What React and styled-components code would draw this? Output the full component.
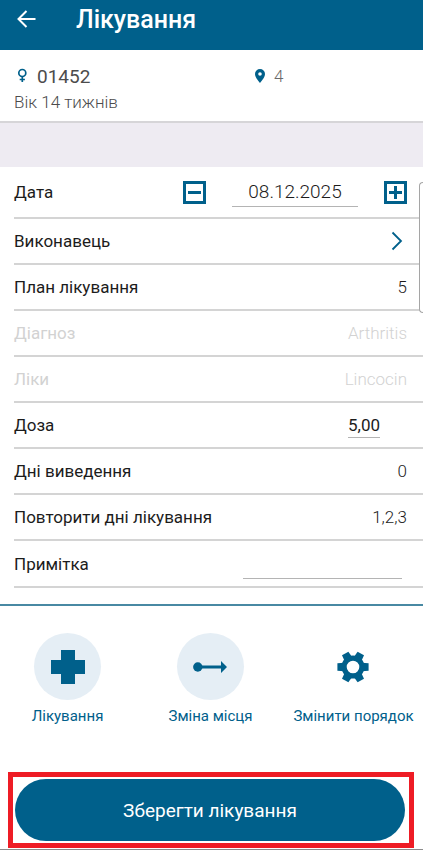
import React, { useState } from 'react';
import styled, { createGlobalStyle, css } from 'styled-components';

const BLUE = '#00608b';

const GlobalStyle = createGlobalStyle`
  * {
    box-sizing: border-box;
  }

  body {
    margin: 0;
    background: #fff;
    color: #1c1c1c;
    font-family: Roboto, 'Open Sans', sans-serif;
    font-size: 17px;
  }

  button, input {
    padding: 0;
    border: 0;
    background: none;
    color: inherit;
    font: inherit;
  }

  button {
    cursor: pointer;
  }

  svg {
    display: block;
    flex: none;
  }
`;

const Page = styled.div`
  position: relative;
  padding-bottom: 1px;
  border-bottom: 1px solid #8c8c8c;
`;

const Header = styled.header`
  display: flex;
  align-items: center;
  gap: 40px;
  height: 50px;
  padding: 0 16px 10px;
  background: ${BLUE};
  color: #fff;
`;

const Title = styled.h1`
  margin: 0;
  font-size: 25px;
  line-height: 32px;
  font-weight: 500;
`;

const Animal = styled.section`
  display: grid;
  grid-template-columns: 3fr 2fr;
  height: 73px;
  padding: 14px 9px 0 14px;
  border-bottom: 2px solid #d6d5d8;
`;

const Tag = styled.div`
  display: flex;
  align-items: center;
  gap: 8px;
  height: 24px;
  color: #6a6a6a;
`;

const Number = styled.span`
  font-size: 19px;
  color: #4c4c4c;
`;

const Place = styled.span`
  font-weight: 300;
`;

const Age = styled.p`
  margin: 2px 0 0;
  line-height: 24px;
  font-weight: 300;
  color: #4c4c4c;
`;

const Band = styled.div`
  height: 44px;
  background: #eeebf2;
`;

const Form = styled.form`
  display: flex;
  flex-direction: column;
`;

const Row = styled.div`
  display: flex;
  align-items: center;
  justify-content: space-between;
  height: ${({ $height }) => $height || '46px'};
  margin-left: 14px;
  padding-right: 16px;
  border-bottom: 2px solid #d4d4d4;
  ${({ $muted }) => $muted && css`
    color: #d2d2d2;
  `}
`;

const Label = styled.label`
  line-height: 24px;
`;

const Value = styled.output`
  font-weight: 300;
`;

const Stepper = styled.div`
  display: flex;
  align-items: center;
  gap: 26px;
`;

const PickButton = styled.button`
  padding: 0 4px;
`;

const Field = styled.input`
  width: ${({ $width }) => $width};
  height: ${({ $height }) => $height || '30px'};
  margin-right: ${({ $inset }) => $inset || '0'};
  border-bottom: 1px solid #b4b4b4;
  border-radius: 0;
  outline: none;
  text-align: center;
  font-size: ${({ $size }) => $size || '17px'};
  font-weight: ${({ $light }) => ($light ? 300 : 400)};
`;

const SideHandle = styled.div`
  position: absolute;
  top: 182px;
  right: 0;
  width: 4px;
  height: 131px;
  border: 1px solid #a5a5a5;
  border-right: 0;
  border-radius: 5px 0 0 5px;
  background: #fff;
`;

const Actions = styled.nav`
  display: grid;
  grid-template-columns: repeat(3, 1fr);
  justify-items: center;
  margin: 16px -2px 0 -4px;
  padding: 27px 0 46px;
  border-top: 2px solid #4889a3;
`;

const Action = styled.button`
  display: flex;
  flex-direction: column;
  align-items: center;
  gap: 6px;
  color: ${BLUE};
  font-size: 15px;
  line-height: 20px;
  white-space: nowrap;
`;

const Round = styled.span`
  display: grid;
  place-items: center;
  width: 67px;
  height: 67px;
  border-radius: 50%;
  background: ${({ $filled }) => ($filled ? '#e5eef5' : 'transparent')};
`;

const Footer = styled.footer`
  margin: 0 9px 0 8px;
  padding: 2px 4px 2px 2px;
  border: 5px solid #ee1c25;
`;

const SaveButton = styled.button`
  display: block;
  width: 100%;
  height: 62px;
  border-radius: 31px;
  background: ${BLUE};
  color: #fff;
  font-size: 19px;
`;

const BackIcon = () => (
  <svg width="20" height="20" viewBox="0 0 20 20" fill="none" stroke="currentColor" strokeWidth="2">
    <path d="M19.500 9H3M10.500 1L2.500 9L10.500 17" />
  </svg>
);

const FemaleIcon = () => (
  <svg width="15" height="16" viewBox="0 0 15 16" fill="none" stroke={BLUE} strokeWidth="1.700">
    <circle cx="8.300" cy="5" r="3.500" />
    <path d="M8.300 8.500V14M5.700 11.500h5.200" />
  </svg>
);

const PinIcon = () => (
  <svg width="12" height="14" viewBox="0 0 12 14">
    <path fill={BLUE} fillRule="evenodd" d="M6 0a5 5 0 0 0-5 5c0 3.600 5 9 5 9s5-5.400 5-9a5 5 0 0 0-5-5zm0 3.200a1.800 1.800 0 1 1 0 3.600a1.800 1.800 0 0 1 0-3.600z" />
  </svg>
);

const BoxIcon = ({ plus }) => (
  <svg width="23" height="23" viewBox="0 0 23 23" fill="none" stroke={BLUE} strokeWidth="3">
    <path d="M1.500 1.500h20v20h-20z" />
    <path d={plus ? 'M5 11.500h13M11.500 5v13' : 'M5 11.500h13'} />
  </svg>
);

const ChevronIcon = () => (
  <svg width="12" height="20" viewBox="0 0 12 20" fill="none" stroke={BLUE} strokeWidth="1.800">
    <path d="M1.500 1.500L10 10L1.500 18.500" />
  </svg>
);

const CrossIcon = () => (
  <svg width="34" height="34" viewBox="0 0 34 34" fill={BLUE}>
    <path d="M10 0h14v10h10v14H24v10H10V24H0V10h10z" />
  </svg>
);

const MoveIcon = () => (
  <svg width="34" height="14" viewBox="0 0 34 14" fill={BLUE}>
    <circle cx="4.800" cy="7" r="4.700" />
    <path d="M5 5.600h23V1l6 6l-6 6V8.400H5z" />
  </svg>
);

const GearIcon = () => (
  <svg width="32" height="32" viewBox="0 0 32 32" fill={BLUE}>
    <path fillRule="evenodd" d="M16 4.500a11.500 11.500 0 1 0 0 23a11.500 11.500 0 0 0 0-23zm0 5.200a6.300 6.300 0 1 1 0 12.600a6.300 6.300 0 0 1 0-12.600z" />
    {[30, 90, 150, 210, 270, 330].map((angle) => (
      <path key={angle} transform={`rotate(${angle} 16 16)`} d="M12.300 0.400h7.400l.6 7h-8.600z" />
    ))}
  </svg>
);

const App = () => {
  const [date, setDate] = useState('08.12.2025');
  const [dose, setDose] = useState('5,00');
  const [note, setNote] = useState('');

  const shiftDate = (days) => {
    const [d, m, y] = date.split('.').map((part) => parseInt(part, 10));
    const next = new Date(y, m - 1, d + days);
    const pad = (n) => String(n).padStart(2, '0');
    setDate(`${pad(next.getDate())}.${pad(next.getMonth() + 1)}.${next.getFullYear()}`);
  };

  return (
    <Page>
      <GlobalStyle />
      <Header>
        <button type="button" aria-label="Назад"><BackIcon /></button>
        <Title>Лікування</Title>
      </Header>
      <Animal>
        <div>
          <Tag><FemaleIcon /><Number>01452</Number></Tag>
          <Age>Вік 14 тижнів</Age>
        </div>
        <Tag><PinIcon /><Place>4</Place></Tag>
      </Animal>
      <Band />
      <Form onSubmit={(event) => event.preventDefault()}>
        <Row $height="52px">
          <Label htmlFor="date">Дата</Label>
          <Stepper>
            <button type="button" aria-label="Попередній день" onClick={() => shiftDate(-1)}><BoxIcon /></button>
            <Field
              id="date"
              $width="126px"
              $size="19px"
              $light
              value={date}
              onChange={(event) => setDate(event.target.value)}
            />
            <button type="button" aria-label="Наступний день" onClick={() => shiftDate(1)}><BoxIcon plus /></button>
          </Stepper>
        </Row>
        <Row>
          <Label htmlFor="worker">Виконавець</Label>
          <PickButton type="button" id="worker"><ChevronIcon /></PickButton>
        </Row>
        <Row>
          <Label htmlFor="plan">План лікування</Label>
          <Value id="plan">5</Value>
        </Row>
        <Row $muted>
          <Label htmlFor="diagnosis">Діагноз</Label>
          <Value id="diagnosis">Arthritis</Value>
        </Row>
        <Row $muted>
          <Label htmlFor="drug">Ліки</Label>
          <Value id="drug">Lincocin</Value>
        </Row>
        <Row>
          <Label htmlFor="dose">Доза</Label>
          <Field
            id="dose"
            $width="32px"
            $height="26px"
            $inset="27px"
            value={dose}
            onChange={(event) => setDose(event.target.value)}
          />
        </Row>
        <Row>
          <Label htmlFor="withdrawal">Дні виведення</Label>
          <Value id="withdrawal">0</Value>
        </Row>
        <Row>
          <Label htmlFor="repeat">Повторити дні лікування</Label>
          <Value id="repeat">1,2,3</Value>
        </Row>
        <Row $height="47px">
          <Label htmlFor="note">Примітка</Label>
          <Field
            id="note"
            $width="159px"
            $inset="5px"
            value={note}
            onChange={(event) => setNote(event.target.value)}
          />
        </Row>
      </Form>
      <Actions>
        <Action type="button"><Round $filled><CrossIcon /></Round>Лікування</Action>
        <Action type="button"><Round $filled><MoveIcon /></Round>Зміна місця</Action>
        <Action type="button"><Round><GearIcon /></Round>Змінити порядок</Action>
      </Actions>
      <Footer>
        <SaveButton type="button">Зберегти лікування</SaveButton>
      </Footer>
      <SideHandle />
    </Page>
  );
};

export default App;
